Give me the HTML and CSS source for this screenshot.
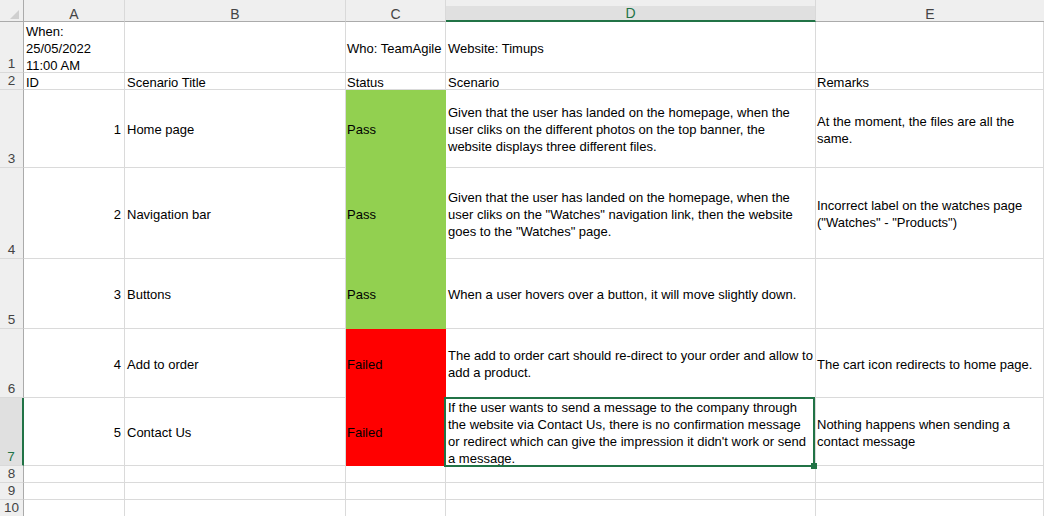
FILE: index.html
```html
<!DOCTYPE html>
<html lang="en">
<head>
<meta charset="utf-8">
<title>Test scenarios</title>
<link rel="stylesheet" href="styles.css">
</head>
<body>
<div class="sheet">
  <div class="corner"><svg width="24" height="22" viewBox="0 0 24 22"><polygon points="20,10 20,19 11,19" fill="#cfcfcf"/></svg></div>
  <div class="colhead">A</div>
  <div class="colhead">B</div>
  <div class="colhead">C</div>
  <div class="colhead sel">D</div>
  <div class="colhead last">E</div>

  <div class="rowhead">1</div>
  <div class="cell">When:<br>25/05/2022<br>11:00 AM</div>
  <div class="cell"></div>
  <div class="cell tight">Who: TeamAgile</div>
  <div class="cell">Website: Timups</div>
  <div class="cell"></div>

  <div class="rowhead">2</div>
  <div class="cell">ID</div>
  <div class="cell">Scenario Title</div>
  <div class="cell tight">Status</div>
  <div class="cell">Scenario</div>
  <div class="cell tight">Remarks</div>

  <div class="rowhead">3</div>
  <div class="cell num">1</div>
  <div class="cell">Home page</div>
  <div class="cell tight pass">Pass</div>
  <div class="cell">Given that the user has landed on the homepage, when the<br>user cliks on the different photos on the top banner, the<br>website displays three different files.</div>
  <div class="cell tight">At the moment, the files are all the<br>same.</div>

  <div class="rowhead">4</div>
  <div class="cell num">2</div>
  <div class="cell">Navigation bar</div>
  <div class="cell tight pass">Pass</div>
  <div class="cell">Given that the user has landed on the homepage, when the<br>user cliks on the "Watches" navigation link, then the website<br>goes to the "Watches" page.</div>
  <div class="cell tight">Incorrect label on the watches page<br>("Watches" - "Products")</div>

  <div class="rowhead">5</div>
  <div class="cell num">3</div>
  <div class="cell">Buttons</div>
  <div class="cell tight pass">Pass</div>
  <div class="cell">When a user hovers over a button, it will move slightly down.</div>
  <div class="cell"></div>

  <div class="rowhead">6</div>
  <div class="cell num">4</div>
  <div class="cell">Add to order</div>
  <div class="cell tight fail">Failed</div>
  <div class="cell">The add to order cart should re-direct to your order and allow to<br>add a product.</div>
  <div class="cell tight">The cart icon redirects to home page.</div>

  <div class="rowhead sel">7</div>
  <div class="cell num">5</div>
  <div class="cell">Contact Us</div>
  <div class="cell tight fail">Failed</div>
  <div class="cell active">If the user wants to send a message to the company through<br>the website via Contact Us, there is no confirmation message<br>or redirect which can give the impression it didn't work or send<br>a message.</div>
  <div class="cell tight">Nothing happens when sending a<br>contact message</div>

  <div class="rowhead">8</div>
  <div class="cell"></div><div class="cell"></div><div class="cell"></div><div class="cell"></div><div class="cell"></div>
  <div class="rowhead">9</div>
  <div class="cell"></div><div class="cell"></div><div class="cell"></div><div class="cell"></div><div class="cell"></div>
  <div class="rowhead">10</div>
  <div class="cell"></div><div class="cell"></div><div class="cell"></div><div class="cell"></div><div class="cell"></div>
</div>
</body>
</html>
```

FILE: styles.css
```css
html, body {
  margin: 0;
  padding: 0;
  background: #ffffff;
  overflow: hidden;
}

body {
  font-family: "Liberation Sans", Arial, sans-serif;
}

.sheet {
  display: grid;
  grid-template-columns: 24px 101px 221px 100px 370px 228px;
  grid-template-rows: 22px 51px 17px 78px 91px 70px 69px 68px 17px 17px 17px;
  width: 1044px;
}

.corner {
  box-sizing: border-box;
  background: #efefef;
  border-right: 1px solid #ababab;
  border-bottom: 1px solid #ababab;
  overflow: hidden;
}

.corner svg {
  display: block;
  margin-left: -1px;
}

.colhead {
  box-sizing: border-box;
  background: #efefef;
  border-right: 1px solid #d9d9d9;
  border-bottom: 1px solid #ababab;
  padding-top: 6px;
  display: flex;
  justify-content: center;
  align-items: center;
  font-size: 14px;
  color: #444444;
}

.colhead.last {
  border-right: none;
}

.colhead.sel {
  background: linear-gradient(#efefef 0 6px, #e0e0e0 6px);
  border-bottom: 2px solid #217346;
  color: #217346;
}

.rowhead {
  box-sizing: border-box;
  background: #efefef;
  border-right: 1px solid #ababab;
  border-bottom: 1px solid #d9d9d9;
  display: flex;
  justify-content: center;
  align-items: flex-end;
  font-size: 13.5px;
  line-height: 17px;
  color: #444444;
}

.rowhead.sel {
  background: #e0e0e0;
  border-right: 2px solid #217346;
  color: #217346;
}

.cell {
  box-sizing: border-box;
  border-right: 1px solid #dadada;
  border-bottom: 1px solid #dadada;
  display: flex;
  align-items: center;
  padding: 2px 2px 0 2px;
  font-size: 13px;
  line-height: 17px;
  color: #000000;
  white-space: nowrap;
  overflow: hidden;
}

.cell.tight {
  padding-left: 1px;
}

.cell.num {
  justify-content: flex-end;
  padding-right: 3px;
}

.cell.pass {
  background: #92d050;
  border-color: #92d050;
}

.cell.fail {
  background: #ff0000;
  border-color: #ff0000;
}

.cell.active {
  position: relative;
  overflow: visible;
}

.cell.active::after {
  content: "";
  position: absolute;
  left: -2px;
  top: -1px;
  right: 0;
  bottom: -2px;
  border: 2px solid #217346;
  pointer-events: none;
}

.cell.active::before {
  content: "";
  position: absolute;
  right: -2px;
  bottom: -4px;
  width: 6px;
  height: 6px;
  background: #217346;
  z-index: 2;
}
```
